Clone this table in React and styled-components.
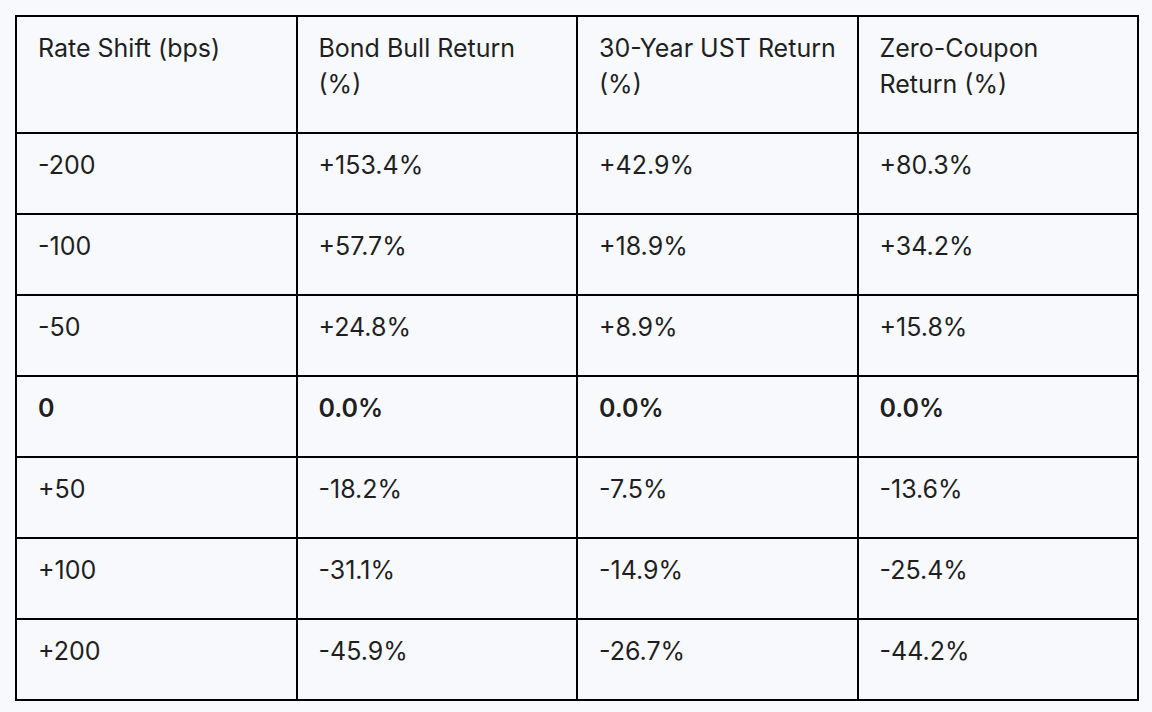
import React from "react";
import styled, { createGlobalStyle } from "styled-components";

const Global = createGlobalStyle`
  html, body { margin: 0; padding: 0; background: #f8f9fd; }
  body { font-family: Inter, "Noto Sans", Roboto, sans-serif; color: #1f1f1f; }
`;

const Wrap = styled.div`
  padding: 15px 0 0 15px;
`;

const Table = styled.table`
  width: 1124px;
  border-collapse: collapse;
  table-layout: fixed;
  border: 2px solid #000;
`;

const Cell = styled.td`
  border: 2px solid #000;
  padding: 13px 20px 30px 21px;
  font-size: 25px;
  line-height: 36px;
  vertical-align: top;
  font-weight: ${(p) => (p.$bold ? 600 : 400)};
  letter-spacing: 0;
`;

const Head = styled(Cell).attrs({ as: "th" })`
  text-align: left;
  font-weight: 400;
`;

const headers = [
  "Rate Shift (bps)",
  "Bond Bull Return (%)",
  "30-Year UST Return (%)",
  "Zero-Coupon Return (%)",
];

const rows = [
  ["-200", "+153.4%", "+42.9%", "+80.3%"],
  ["-100", "+57.7%", "+18.9%", "+34.2%"],
  ["-50", "+24.8%", "+8.9%", "+15.8%"],
  ["0", "0.0%", "0.0%", "0.0%", true],
  ["+50", "-18.2%", "-7.5%", "-13.6%"],
  ["+100", "-31.1%", "-14.9%", "-25.4%"],
  ["+200", "-45.9%", "-26.7%", "-44.2%"],
];

export default function App() {
  return (
    <>
      <Global />
      <Wrap>
        <Table>
          <thead>
            <tr>
              {headers.map((h) => (
                <Head key={h}>{h}</Head>
              ))}
            </tr>
          </thead>
          <tbody>
            {rows.map((r) => (
              <tr key={r[0]}>
                {r.slice(0, 4).map((c, i) => (
                  <Cell key={i} $bold={r[4]}>
                    {c}
                  </Cell>
                ))}
              </tr>
            ))}
          </tbody>
        </Table>
      </Wrap>
    </>
  );
}
